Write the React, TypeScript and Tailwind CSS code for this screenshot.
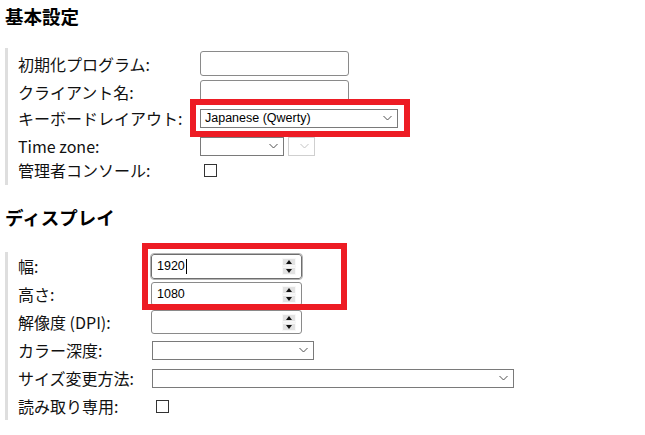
import React from 'react';

const font = { fontFamily: '"Noto Sans CJK JP", "Noto Sans", sans-serif' };

const Chevron: React.FC<{ disabled?: boolean }> = ({ disabled }) => (
  <svg width="9" height="6" viewBox="0 0 9 6" className="shrink-0">
    <path d="M0.5 1 L4.5 5 L8.5 1" fill="none" stroke={disabled ? '#c4c4c4' : '#505050'} strokeWidth="1" />
  </svg>
);

const TextBox: React.FC<{ w: string }> = ({ w }) => (
  <div className={`${w} h-[25px] border border-[#8a8a8a] rounded-[3px] bg-white`} />
);

const Select: React.FC<{ w: string; value?: string; disabled?: boolean }> = ({ w, value, disabled }) => (
  <div
    className={`${w} h-[19px] flex items-center justify-between pl-[4px] pr-[5px] bg-white border ${
      disabled ? 'border-[#cfcfcf]' : 'border-[#7a7a7a]'
    }`}
  >
    <span className="text-[12.5px] text-black leading-none" style={{ fontFamily: '"Liberation Sans", Arial, sans-serif' }}>
      {value}
    </span>
    <Chevron disabled={disabled} />
  </div>
);

const Spinner: React.FC = () => (
  <div className="w-[14px] h-[17px] flex flex-col gap-px bg-[#f4f4f4]">
    <div className="flex-1 bg-[#e2e2e2] border border-[#f8f8f8] flex items-center justify-center">
      <svg width="6" height="4" viewBox="0 0 6 4"><path d="M0 4 L3 0 L6 4 Z" fill="#111" /></svg>
    </div>
    <div className="flex-1 bg-[#e2e2e2] border border-[#f8f8f8] flex items-center justify-center">
      <svg width="6" height="4" viewBox="0 0 6 4"><path d="M0 0 L6 0 L3 4 Z" fill="#111" /></svg>
    </div>
  </div>
);

const NumberBox: React.FC<{ value?: string; focused?: boolean; h: string }> = ({ value, focused, h }) => (
  <div
    className={`w-[151px] ${h} flex items-center justify-between pl-[5px] pr-[5px] bg-white rounded-[3px] border ${
      focused ? 'border-[#6e6e6e] outline outline-1 outline-[#b4b4b4]' : 'border-[#8a8a8a]'
    }`}
  >
    <span className="flex items-center text-[12.5px] text-black" style={{ fontFamily: '"Liberation Sans", Arial, sans-serif' }}>
      {value}
      {focused && <span className="ml-px w-px h-[15px] bg-black" />}
    </span>
    <Spinner />
  </div>
);

const Checkbox: React.FC = () => <div className="w-[13px] h-[13px] border border-[#333] bg-white ml-[4px]" />;

const Row: React.FC<{ label: string; lw: string; h: string; children: React.ReactNode }> = ({ label, lw, h, children }) => (
  <div className={`flex items-center ${h}`}>
    <div className={`${lw} shrink-0 text-[16px] text-[#111] leading-none whitespace-nowrap`}>{label}</div>
    {children}
  </div>
);

export default function App() {
  return (
    <div className="relative w-[645px] h-[435px] bg-white overflow-hidden" style={font}>
      <h2 className="pt-[4px] pl-[5px] h-[28px] leading-[24px] text-[18.5px] font-bold text-black">基本設定</h2>

      <div className="mt-[20px] ml-[5px] border-l-[3px] border-[#dedede] pl-[10px] pt-px pb-[7px]">
        <Row label="初期化プログラム:" lw="w-[182px]" h="h-[29px]">
          <TextBox w="w-[149px]" />
        </Row>
        <Row label="クライアント名:" lw="w-[182px]" h="h-[28px]">
          <TextBox w="w-[149px]" />
        </Row>
        <Row label="キーボードレイアウト:" lw="w-[182px]" h="h-[24px]">
          <Select w="w-[198px]" value="Japanese (Qwerty)" />
        </Row>
        <Row label="Time zone:" lw="w-[182px]" h="h-[32px]">
          <div className="flex gap-[4px]">
            <Select w="w-[84px]" />
            <Select w="w-[27px]" disabled />
          </div>
        </Row>
        <Row label="管理者コンソール:" lw="w-[182px]" h="h-[16px]">
          <Checkbox />
        </Row>
      </div>

      <h2 className="mt-[20px] pl-[5px] h-[24px] leading-[24px] text-[18.5px] font-bold text-black">ディスプレイ</h2>

      <div className="mt-[23px] ml-[5px] border-l-[3px] border-[#dedede] pl-[10px]">
        <Row label="幅:" lw="w-[133px]" h="h-[28px]">
          <NumberBox value="1920" focused h="h-[25px]" />
        </Row>
        <Row label="高さ:" lw="w-[133px]" h="h-[28px]">
          <NumberBox value="1080" h="h-[24px]" />
        </Row>
        <Row label="解像度 (DPI):" lw="w-[133px]" h="h-[28px]">
          <NumberBox h="h-[24px]" />
        </Row>
        <Row label="カラー深度:" lw="w-[134px]" h="h-[28px]">
          <Select w="w-[162px]" />
        </Row>
        <Row label="サイズ変更方法:" lw="w-[134px]" h="h-[28px]">
          <Select w="w-[362px]" />
        </Row>
        <Row label="読み取り専用:" lw="w-[134px]" h="h-[28px]">
          <Checkbox />
        </Row>
      </div>

      {/* annotation boxes */}
      <div className="absolute left-[190px] top-[99px] w-[220px] h-[38px] border-[6px] border-[#ed1c24]" />
      <div className="absolute left-[142px] top-[243px] w-[205px] h-[67px] border-[6px] border-[#ed1c24]" />
    </div>
  );
}
